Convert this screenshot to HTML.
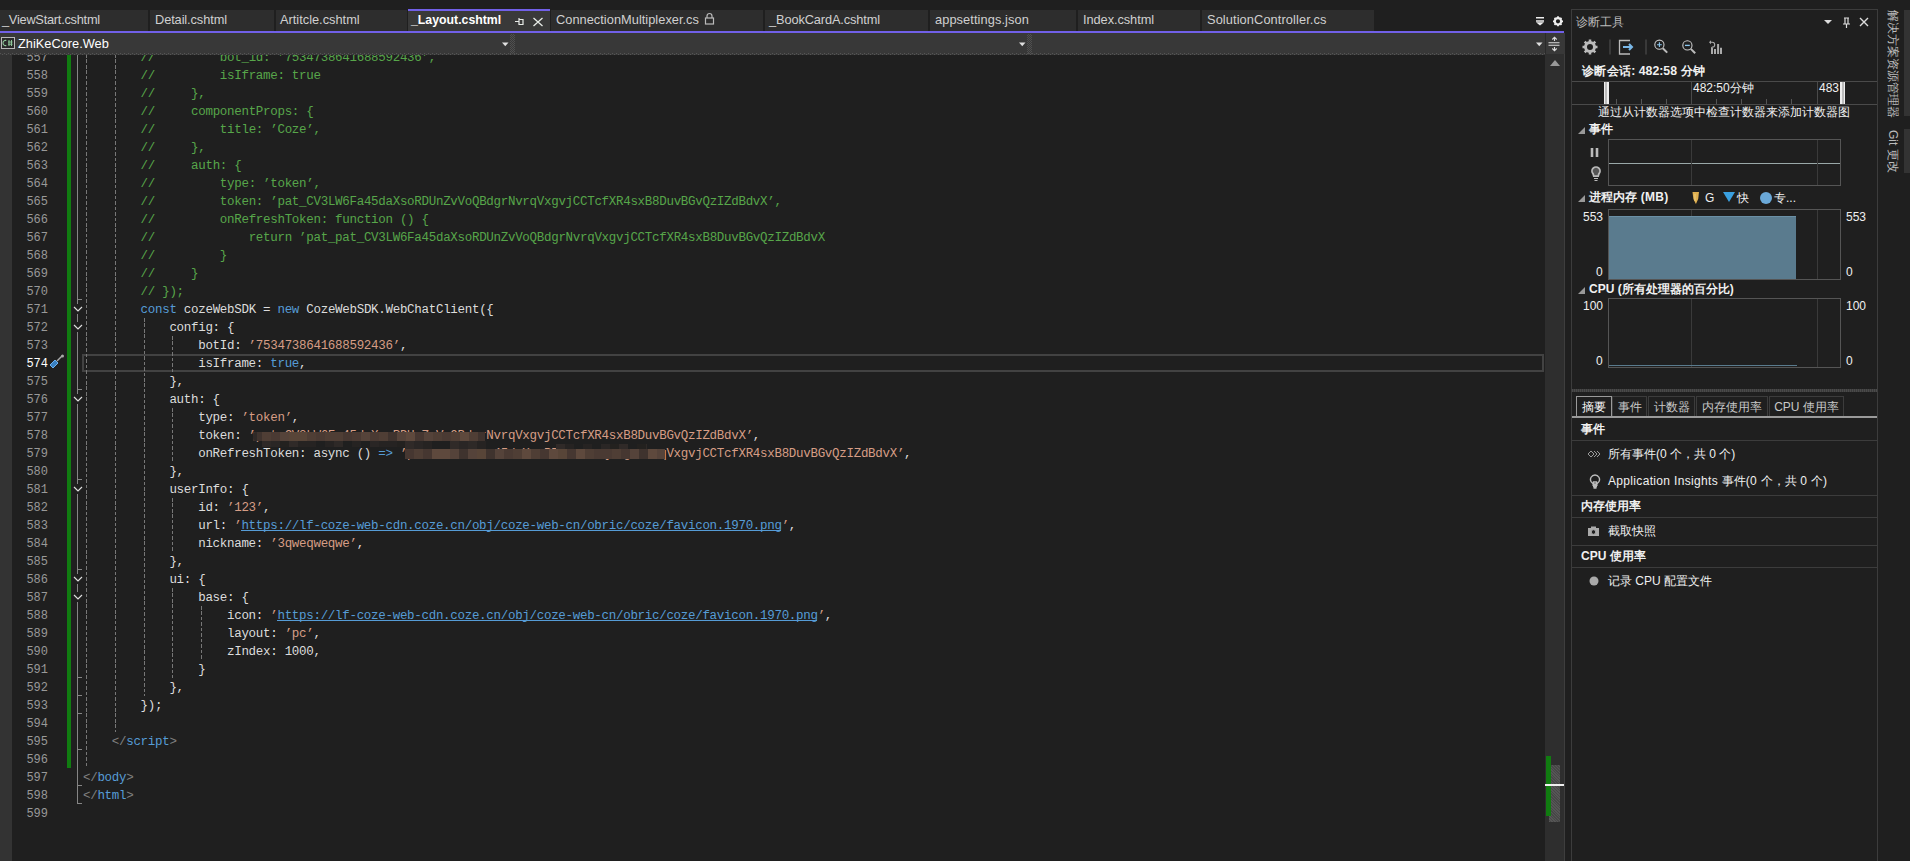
<!DOCTYPE html><html><head><meta charset="utf-8"><style>
*{margin:0;padding:0;box-sizing:border-box}
html,body{width:1910px;height:861px;overflow:hidden;background:#1f1f1f}
body{position:relative;font-family:"Liberation Sans",sans-serif;color:#dcdcdc}
.a{position:absolute}
.code{position:absolute;font-family:"Liberation Mono",monospace;font-size:12.5px;letter-spacing:-0.3px;white-space:pre;line-height:18px;height:18px}
.code i{display:inline-block;width:7.203125px;font-style:normal;letter-spacing:0}
.ln{position:absolute;left:11px;width:37px;text-align:right;font-family:"Liberation Mono",monospace;font-size:12px;line-height:18px;color:#999;white-space:pre}
.tab{position:absolute;top:10px;height:21px;background:#2d2d2d;font-size:12.8px;line-height:20px;color:#d0d0d0;white-space:pre}
.tab span{position:absolute;top:0}
.dg{position:absolute;width:1px;background:repeating-linear-gradient(to bottom,#777 0 3.6px,transparent 3.6px 5.45px)}
.pt{position:absolute;white-space:pre;color:#f0f0f0;font-size:12px;line-height:14px}
.b{font-weight:bold}
.cj{display:inline-block;width:1em;text-align:center;text-indent:0;letter-spacing:0}
.sep{position:absolute;left:1572px;width:305px;height:1px;background:#3c3c3c}
</style></head><body>
<div class="tab" style="left:0px;width:148px"><span style="left:2px;letter-spacing:-0.25px">_ViewStart.cshtml</span></div><div class="tab" style="left:150px;width:124px"><span style="left:5px;letter-spacing:-0.1px">Detail.cshtml</span></div><div class="tab" style="left:276px;width:131px"><span style="left:4px;letter-spacing:0px">Artitcle.cshtml</span></div><div class="tab" style="left:551px;width:212px"><span style="left:5px;letter-spacing:0.03px">ConnectionMultiplexer.cs</span></div><div class="tab" style="left:765px;width:163px"><span style="left:4px;letter-spacing:-0.12px">_BookCardA.cshtml</span></div><div class="tab" style="left:930px;width:146px"><span style="left:5px;letter-spacing:0.09px">appsettings.json</span></div><div class="tab" style="left:1078px;width:122px"><span style="left:5px;letter-spacing:-0.07px">Index.cshtml</span></div><div class="tab" style="left:1202px;width:172px"><span style="left:5px;letter-spacing:0.1px">SolutionController.cs</span></div><div class="tab" style="left:408px;width:142px;top:9px;height:22px;background:#393939;border-top:2px solid #7160e8"><span style="left:3px;top:-1px;color:#fff;font-weight:bold;font-size:12.3px">_Layout.cshtml</span></div><svg class="a" style="left:514px;top:17px" width="30" height="10" viewBox="0 0 30 10"><path d="M1 4.5h4M5 1v7M5.5 2.5h3.5v5h-3.5" stroke="#e8ece8" stroke-width="1.2" fill="none"/><path d="M19.5 1l9 8M28.5 1l-9 8" stroke="#e8ece8" stroke-width="1.3"/></svg><svg class="a" style="left:704px;top:12px" width="11" height="13" viewBox="0 0 11 13"><path d="M3 6V4a2.5 2.5 0 0 1 5 0v2" stroke="#bbb" stroke-width="1.2" fill="none"/><rect x="1.5" y="6" width="8" height="6" stroke="#bbb" stroke-width="1.2" fill="none"/></svg><svg class="a" style="left:1535px;top:16px" width="30" height="11" viewBox="0 0 30 11"><path d="M1 1.7h8M1 5h8" stroke="#eee" stroke-width="1.6"/><path d="M1 6.2h8L5 9.5z" fill="#eee"/><g transform="translate(23,5.3)"><circle r="3.2" stroke="#eee" stroke-width="2.2" fill="none"/><g stroke="#eee" stroke-width="1.8"><path d="M0-5v2M0 3v2M-5 0h2M3 0h2M-3.5-3.5l1.4 1.4M2.1 2.1l1.4 1.4M-3.5 3.5l1.4-1.4M2.1-2.1l1.4-1.4"/></g></g></svg><div class="a" style="left:0;top:31px;width:1564px;height:2px;background:#7160e8"></div><div class="a" style="left:0;top:33px;width:1565px;height:22px;background:#383838"></div><div class="a" style="left:0;top:53px;width:1545px;height:1px;background:repeating-linear-gradient(90deg,#555 0 1px,#3a3a3a 1px 2px,#383838 2px 4px)"></div><div class="a" style="left:0;top:54px;width:1545px;height:1px;background:repeating-linear-gradient(90deg,#383838 0 2px,#555 2px 3px,#3a3a3a 3px 4px)"></div><div class="a" style="left:510px;top:34px;width:5px;height:20px;background-image:linear-gradient(45deg,#505050 25%,transparent 25%,transparent 75%,#505050 75%),linear-gradient(45deg,#505050 25%,transparent 25%,transparent 75%,#505050 75%);background-size:2px 2px;background-position:0 0,1px 1px"></div><div class="a" style="left:1027px;top:34px;width:5px;height:20px;background-image:linear-gradient(45deg,#505050 25%,transparent 25%,transparent 75%,#505050 75%),linear-gradient(45deg,#505050 25%,transparent 25%,transparent 75%,#505050 75%);background-size:2px 2px;background-position:0 0,1px 1px"></div><svg class="a" style="left:502px;top:42px" width="7" height="5"><path d="M0 .5h6.5L3.25 4.2z" fill="#e0e0e0"/></svg><svg class="a" style="left:1019px;top:42px" width="7" height="5"><path d="M0 .5h6.5L3.25 4.2z" fill="#e0e0e0"/></svg><svg class="a" style="left:1536px;top:42px" width="7" height="5"><path d="M0 .5h6.5L3.25 4.2z" fill="#e0e0e0"/></svg><div class="a" style="left:1545px;top:33px;width:1px;height:21px;background:#2a2a2a"></div><svg class="a" style="left:1547px;top:36px" width="14" height="16" viewBox="0 0 14 16"><path d="M1.5 6.8h11M1.5 9.3h11M7.5 1.5v3.5M7.5 11v3.5" stroke="#ddd" stroke-width="1.1" fill="none"/><path d="M5.3 3.5l2.2-2.2 2.2 2.2M5.3 12.5l2.2 2.2 2.2-2.2" stroke="#ddd" stroke-width="1.1" fill="none"/></svg><svg class="a" style="left:1px;top:37px" width="14" height="12" viewBox="0 0 14 12"><rect x="0.5" y="0.5" width="13" height="11" fill="#2a2a2a" stroke="#b8b8b8"/><path d="M5.3 3.6a2.4 2.6 0 1 0 0 4.8" stroke="#8fc79a" stroke-width="1.1" fill="none"/><path d="M8 3v6M10.5 3v6M7 5h4.5M7 7.2h4.5" stroke="#8fc79a" stroke-width="1"/></svg><div class="a" style="left:18px;top:36px;font-size:12.8px;line-height:16px;color:#fff">ZhiKeCore.Web</div><div class="a" style="left:0;top:55px;width:1545px;height:806px;overflow:hidden"><div class="a" style="left:0;top:-55px;width:1545px;height:861px"><div class="a" style="left:0;top:54px;width:12px;height:807px;background:#333"></div><div class="a" style="left:67px;top:54px;width:4px;height:714px;background:#107c10"></div><div class="a" style="left:82px;top:354px;width:1462px;height:18px;border:2px solid #424242"></div><div class="a" style="left:77px;top:54px;width:1px;height:250px;background:#858585"></div><div class="a" style="left:77px;top:314px;width:1px;height:8px;background:#858585"></div><div class="a" style="left:77px;top:332px;width:1px;height:62px;background:#858585"></div><div class="a" style="left:77px;top:404px;width:1px;height:80px;background:#858585"></div><div class="a" style="left:77px;top:494px;width:1px;height:80px;background:#858585"></div><div class="a" style="left:77px;top:584px;width:1px;height:8px;background:#858585"></div><div class="a" style="left:77px;top:602px;width:1px;height:202px;background:#858585"></div><svg class="a" style="left:73px;top:306px" width="10" height="6"><path d="M1 1l4 4 4-4" stroke="#ddd" stroke-width="1.2" fill="none"/></svg><svg class="a" style="left:73px;top:324px" width="10" height="6"><path d="M1 1l4 4 4-4" stroke="#ddd" stroke-width="1.2" fill="none"/></svg><svg class="a" style="left:73px;top:396px" width="10" height="6"><path d="M1 1l4 4 4-4" stroke="#ddd" stroke-width="1.2" fill="none"/></svg><svg class="a" style="left:73px;top:486px" width="10" height="6"><path d="M1 1l4 4 4-4" stroke="#ddd" stroke-width="1.2" fill="none"/></svg><svg class="a" style="left:73px;top:576px" width="10" height="6"><path d="M1 1l4 4 4-4" stroke="#ddd" stroke-width="1.2" fill="none"/></svg><svg class="a" style="left:73px;top:594px" width="10" height="6"><path d="M1 1l4 4 4-4" stroke="#ddd" stroke-width="1.2" fill="none"/></svg><div class="a" style="left:77px;top:299px;width:5px;height:1px;background:#858585"></div><div class="a" style="left:77px;top:389px;width:5px;height:1px;background:#858585"></div><div class="a" style="left:77px;top:479px;width:5px;height:1px;background:#858585"></div><div class="a" style="left:77px;top:569px;width:5px;height:1px;background:#858585"></div><div class="a" style="left:77px;top:677px;width:5px;height:1px;background:#858585"></div><div class="a" style="left:77px;top:695px;width:5px;height:1px;background:#858585"></div><div class="a" style="left:77px;top:713px;width:5px;height:1px;background:#858585"></div><div class="a" style="left:77px;top:749px;width:5px;height:1px;background:#858585"></div><div class="a" style="left:77px;top:785px;width:5px;height:1px;background:#858585"></div><div class="a" style="left:77px;top:803px;width:5px;height:1px;background:#858585"></div><div class="dg" style="left:86px;top:54px;height:714px"></div><div class="dg" style="left:115px;top:54px;height:678px"></div><div class="dg" style="left:144px;top:318px;height:378px"></div><div class="dg" style="left:172px;top:336px;height:36px"></div><div class="dg" style="left:172px;top:408px;height:54px"></div><div class="dg" style="left:172px;top:498px;height:54px"></div><div class="dg" style="left:172px;top:588px;height:90px"></div><div class="dg" style="left:201px;top:606px;height:54px"></div><div class="ln" style="top:49px;color:#999">557</div><div class="code" style="left:140.6px;top:49px"><span style="color:#57a64a"><i>/</i><i>/</i><i> </i><i> </i><i> </i><i> </i><i> </i><i> </i><i> </i><i> </i><i> </i><i>b</i><i>o</i><i>t</i><i>_</i><i>i</i><i>d</i><i>:</i><i> </i><i>’</i><i>7</i><i>5</i><i>3</i><i>4</i><i>7</i><i>3</i><i>8</i><i>6</i><i>4</i><i>1</i><i>6</i><i>8</i><i>8</i><i>5</i><i>9</i><i>2</i><i>4</i><i>3</i><i>6</i><i>’</i><i>,</i></span></div><div class="ln" style="top:67px;color:#999">558</div><div class="code" style="left:140.6px;top:67px"><span style="color:#57a64a"><i>/</i><i>/</i><i> </i><i> </i><i> </i><i> </i><i> </i><i> </i><i> </i><i> </i><i> </i><i>i</i><i>s</i><i>I</i><i>f</i><i>r</i><i>a</i><i>m</i><i>e</i><i>:</i><i> </i><i>t</i><i>r</i><i>u</i><i>e</i></span></div><div class="ln" style="top:85px;color:#999">559</div><div class="code" style="left:140.6px;top:85px"><span style="color:#57a64a"><i>/</i><i>/</i><i> </i><i> </i><i> </i><i> </i><i> </i><i>}</i><i>,</i></span></div><div class="ln" style="top:103px;color:#999">560</div><div class="code" style="left:140.6px;top:103px"><span style="color:#57a64a"><i>/</i><i>/</i><i> </i><i> </i><i> </i><i> </i><i> </i><i>c</i><i>o</i><i>m</i><i>p</i><i>o</i><i>n</i><i>e</i><i>n</i><i>t</i><i>P</i><i>r</i><i>o</i><i>p</i><i>s</i><i>:</i><i> </i><i>{</i></span></div><div class="ln" style="top:121px;color:#999">561</div><div class="code" style="left:140.6px;top:121px"><span style="color:#57a64a"><i>/</i><i>/</i><i> </i><i> </i><i> </i><i> </i><i> </i><i> </i><i> </i><i> </i><i> </i><i>t</i><i>i</i><i>t</i><i>l</i><i>e</i><i>:</i><i> </i><i>’</i><i>C</i><i>o</i><i>z</i><i>e</i><i>’</i><i>,</i></span></div><div class="ln" style="top:139px;color:#999">562</div><div class="code" style="left:140.6px;top:139px"><span style="color:#57a64a"><i>/</i><i>/</i><i> </i><i> </i><i> </i><i> </i><i> </i><i>}</i><i>,</i></span></div><div class="ln" style="top:157px;color:#999">563</div><div class="code" style="left:140.6px;top:157px"><span style="color:#57a64a"><i>/</i><i>/</i><i> </i><i> </i><i> </i><i> </i><i> </i><i>a</i><i>u</i><i>t</i><i>h</i><i>:</i><i> </i><i>{</i></span></div><div class="ln" style="top:175px;color:#999">564</div><div class="code" style="left:140.6px;top:175px"><span style="color:#57a64a"><i>/</i><i>/</i><i> </i><i> </i><i> </i><i> </i><i> </i><i> </i><i> </i><i> </i><i> </i><i>t</i><i>y</i><i>p</i><i>e</i><i>:</i><i> </i><i>’</i><i>t</i><i>o</i><i>k</i><i>e</i><i>n</i><i>’</i><i>,</i></span></div><div class="ln" style="top:193px;color:#999">565</div><div class="code" style="left:140.6px;top:193px"><span style="color:#57a64a"><i>/</i><i>/</i><i> </i><i> </i><i> </i><i> </i><i> </i><i> </i><i> </i><i> </i><i> </i><i>t</i><i>o</i><i>k</i><i>e</i><i>n</i><i>:</i><i> </i><i>’</i><i>p</i><i>a</i><i>t</i><i>_</i><i>C</i><i>V</i><i>3</i><i>L</i><i>W</i><i>6</i><i>F</i><i>a</i><i>4</i><i>5</i><i>d</i><i>a</i><i>X</i><i>s</i><i>o</i><i>R</i><i>D</i><i>U</i><i>n</i><i>Z</i><i>v</i><i>V</i><i>o</i><i>Q</i><i>B</i><i>d</i><i>g</i><i>r</i><i>N</i><i>v</i><i>r</i><i>q</i><i>V</i><i>x</i><i>g</i><i>v</i><i>j</i><i>C</i><i>C</i><i>T</i><i>c</i><i>f</i><i>X</i><i>R</i><i>4</i><i>s</i><i>x</i><i>B</i><i>8</i><i>D</i><i>u</i><i>v</i><i>B</i><i>G</i><i>v</i><i>Q</i><i>z</i><i>I</i><i>Z</i><i>d</i><i>B</i><i>d</i><i>v</i><i>X</i><i>’</i><i>,</i></span></div><div class="ln" style="top:211px;color:#999">566</div><div class="code" style="left:140.6px;top:211px"><span style="color:#57a64a"><i>/</i><i>/</i><i> </i><i> </i><i> </i><i> </i><i> </i><i> </i><i> </i><i> </i><i> </i><i>o</i><i>n</i><i>R</i><i>e</i><i>f</i><i>r</i><i>e</i><i>s</i><i>h</i><i>T</i><i>o</i><i>k</i><i>e</i><i>n</i><i>:</i><i> </i><i>f</i><i>u</i><i>n</i><i>c</i><i>t</i><i>i</i><i>o</i><i>n</i><i> </i><i>(</i><i>)</i><i> </i><i>{</i></span></div><div class="ln" style="top:229px;color:#999">567</div><div class="code" style="left:140.6px;top:229px"><span style="color:#57a64a"><i>/</i><i>/</i><i> </i><i> </i><i> </i><i> </i><i> </i><i> </i><i> </i><i> </i><i> </i><i> </i><i> </i><i> </i><i> </i><i>r</i><i>e</i><i>t</i><i>u</i><i>r</i><i>n</i><i> </i><i>’</i><i>p</i><i>a</i><i>t</i><i>_</i><i>p</i><i>a</i><i>t</i><i>_</i><i>C</i><i>V</i><i>3</i><i>L</i><i>W</i><i>6</i><i>F</i><i>a</i><i>4</i><i>5</i><i>d</i><i>a</i><i>X</i><i>s</i><i>o</i><i>R</i><i>D</i><i>U</i><i>n</i><i>Z</i><i>v</i><i>V</i><i>o</i><i>Q</i><i>B</i><i>d</i><i>g</i><i>r</i><i>N</i><i>v</i><i>r</i><i>q</i><i>V</i><i>x</i><i>g</i><i>v</i><i>j</i><i>C</i><i>C</i><i>T</i><i>c</i><i>f</i><i>X</i><i>R</i><i>4</i><i>s</i><i>x</i><i>B</i><i>8</i><i>D</i><i>u</i><i>v</i><i>B</i><i>G</i><i>v</i><i>Q</i><i>z</i><i>I</i><i>Z</i><i>d</i><i>B</i><i>d</i><i>v</i><i>X</i></span></div><div class="ln" style="top:247px;color:#999">568</div><div class="code" style="left:140.6px;top:247px"><span style="color:#57a64a"><i>/</i><i>/</i><i> </i><i> </i><i> </i><i> </i><i> </i><i> </i><i> </i><i> </i><i> </i><i>}</i></span></div><div class="ln" style="top:265px;color:#999">569</div><div class="code" style="left:140.6px;top:265px"><span style="color:#57a64a"><i>/</i><i>/</i><i> </i><i> </i><i> </i><i> </i><i> </i><i>}</i></span></div><div class="ln" style="top:283px;color:#999">570</div><div class="code" style="left:140.6px;top:283px"><span style="color:#57a64a"><i>/</i><i>/</i><i> </i><i>}</i><i>)</i><i>;</i></span></div><div class="ln" style="top:301px;color:#999">571</div><div class="code" style="left:140.6px;top:301px"><span style="color:#569cd6"><i>c</i><i>o</i><i>n</i><i>s</i><i>t</i></span><span style="color:#dcdcdc"><i> </i><i>c</i><i>o</i><i>z</i><i>e</i><i>W</i><i>e</i><i>b</i><i>S</i><i>D</i><i>K</i><i> </i><i>=</i><i> </i></span><span style="color:#569cd6"><i>n</i><i>e</i><i>w</i></span><span style="color:#dcdcdc"><i> </i><i>C</i><i>o</i><i>z</i><i>e</i><i>W</i><i>e</i><i>b</i><i>S</i><i>D</i><i>K</i><i>.</i><i>W</i><i>e</i><i>b</i><i>C</i><i>h</i><i>a</i><i>t</i><i>C</i><i>l</i><i>i</i><i>e</i><i>n</i><i>t</i><i>(</i><i>{</i></span></div><div class="ln" style="top:319px;color:#999">572</div><div class="code" style="left:169.4px;top:319px"><span style="color:#dcdcdc"><i>c</i><i>o</i><i>n</i><i>f</i><i>i</i><i>g</i><i>:</i><i> </i><i>{</i></span></div><div class="ln" style="top:337px;color:#999">573</div><div class="code" style="left:198.2px;top:337px"><span style="color:#dcdcdc"><i>b</i><i>o</i><i>t</i><i>I</i><i>d</i><i>:</i><i> </i></span><span style="color:#d69d85"><i>’</i><i>7</i><i>5</i><i>3</i><i>4</i><i>7</i><i>3</i><i>8</i><i>6</i><i>4</i><i>1</i><i>6</i><i>8</i><i>8</i><i>5</i><i>9</i><i>2</i><i>4</i><i>3</i><i>6</i><i>’</i></span><span style="color:#dcdcdc"><i>,</i></span></div><div class="ln" style="top:355px;color:#ffffff">574</div><div class="code" style="left:198.2px;top:355px"><span style="color:#dcdcdc"><i>i</i><i>s</i><i>I</i><i>f</i><i>r</i><i>a</i><i>m</i><i>e</i><i>:</i><i> </i></span><span style="color:#569cd6"><i>t</i><i>r</i><i>u</i><i>e</i></span><span style="color:#dcdcdc"><i>,</i></span></div><div class="ln" style="top:373px;color:#999">575</div><div class="code" style="left:169.4px;top:373px"><span style="color:#dcdcdc"><i>}</i><i>,</i></span></div><div class="ln" style="top:391px;color:#999">576</div><div class="code" style="left:169.4px;top:391px"><span style="color:#dcdcdc"><i>a</i><i>u</i><i>t</i><i>h</i><i>:</i><i> </i><i>{</i></span></div><div class="ln" style="top:409px;color:#999">577</div><div class="code" style="left:198.2px;top:409px"><span style="color:#dcdcdc"><i>t</i><i>y</i><i>p</i><i>e</i><i>:</i><i> </i></span><span style="color:#d69d85"><i>’</i><i>t</i><i>o</i><i>k</i><i>e</i><i>n</i><i>’</i></span><span style="color:#dcdcdc"><i>,</i></span></div><div class="ln" style="top:427px;color:#999">578</div><div class="code" style="left:198.2px;top:427px"><span style="color:#dcdcdc"><i>t</i><i>o</i><i>k</i><i>e</i><i>n</i><i>:</i><i> </i></span><span style="color:#d69d85"><i>’</i><i>p</i><i>a</i><i>t</i><i>_</i><i>C</i><i>V</i><i>3</i><i>L</i><i>W</i><i>6</i><i>F</i><i>a</i><i>4</i><i>5</i><i>d</i><i>a</i><i>X</i><i>s</i><i>o</i><i>R</i><i>D</i><i>U</i><i>n</i><i>Z</i><i>v</i><i>V</i><i>o</i><i>Q</i><i>B</i><i>d</i><i>g</i><i>r</i><i>N</i><i>v</i><i>r</i><i>q</i><i>V</i><i>x</i><i>g</i><i>v</i><i>j</i><i>C</i><i>C</i><i>T</i><i>c</i><i>f</i><i>X</i><i>R</i><i>4</i><i>s</i><i>x</i><i>B</i><i>8</i><i>D</i><i>u</i><i>v</i><i>B</i><i>G</i><i>v</i><i>Q</i><i>z</i><i>I</i><i>Z</i><i>d</i><i>B</i><i>d</i><i>v</i><i>X</i><i>’</i></span><span style="color:#dcdcdc"><i>,</i></span></div><div class="ln" style="top:445px;color:#999">579</div><div class="code" style="left:198.2px;top:445px"><span style="color:#dcdcdc"><i>o</i><i>n</i><i>R</i><i>e</i><i>f</i><i>r</i><i>e</i><i>s</i><i>h</i><i>T</i><i>o</i><i>k</i><i>e</i><i>n</i><i>:</i><i> </i><i>a</i><i>s</i><i>y</i><i>n</i><i>c</i><i> </i><i>(</i><i>)</i><i> </i></span><span style="color:#569cd6"><i>=</i><i>&gt;</i></span><span style="color:#dcdcdc"><i> </i></span><span style="color:#d69d85"><i>’</i><i>p</i><i>a</i><i>t</i><i>_</i><i>C</i><i>V</i><i>3</i><i>L</i><i>W</i><i>6</i><i>F</i><i>a</i><i>4</i><i>5</i><i>d</i><i>a</i><i>X</i><i>s</i><i>o</i><i>R</i><i>D</i><i>U</i><i>n</i><i>Z</i><i>v</i><i>V</i><i>o</i><i>Q</i><i>B</i><i>d</i><i>g</i><i>r</i><i>N</i><i>v</i><i>r</i><i>q</i><i>V</i><i>x</i><i>g</i><i>v</i><i>j</i><i>C</i><i>C</i><i>T</i><i>c</i><i>f</i><i>X</i><i>R</i><i>4</i><i>s</i><i>x</i><i>B</i><i>8</i><i>D</i><i>u</i><i>v</i><i>B</i><i>G</i><i>v</i><i>Q</i><i>z</i><i>I</i><i>Z</i><i>d</i><i>B</i><i>d</i><i>v</i><i>X</i><i>’</i></span><span style="color:#dcdcdc"><i>,</i></span></div><div class="ln" style="top:463px;color:#999">580</div><div class="code" style="left:169.4px;top:463px"><span style="color:#dcdcdc"><i>}</i><i>,</i></span></div><div class="ln" style="top:481px;color:#999">581</div><div class="code" style="left:169.4px;top:481px"><span style="color:#dcdcdc"><i>u</i><i>s</i><i>e</i><i>r</i><i>I</i><i>n</i><i>f</i><i>o</i><i>:</i><i> </i><i>{</i></span></div><div class="ln" style="top:499px;color:#999">582</div><div class="code" style="left:198.2px;top:499px"><span style="color:#dcdcdc"><i>i</i><i>d</i><i>:</i><i> </i></span><span style="color:#d69d85"><i>’</i><i>1</i><i>2</i><i>3</i><i>’</i></span><span style="color:#dcdcdc"><i>,</i></span></div><div class="ln" style="top:517px;color:#999">583</div><div class="a" style="left:241.4px;top:530px;width:540.0px;height:1px;background:#569cd6"></div><div class="code" style="left:198.2px;top:517px"><span style="color:#dcdcdc"><i>u</i><i>r</i><i>l</i><i>:</i><i> </i></span><span style="color:#d69d85"><i>’</i></span><span style="color:#569cd6"><i>h</i><i>t</i><i>t</i><i>p</i><i>s</i><i>:</i><i>/</i><i>/</i><i>l</i><i>f</i><i>-</i><i>c</i><i>o</i><i>z</i><i>e</i><i>-</i><i>w</i><i>e</i><i>b</i><i>-</i><i>c</i><i>d</i><i>n</i><i>.</i><i>c</i><i>o</i><i>z</i><i>e</i><i>.</i><i>c</i><i>n</i><i>/</i><i>o</i><i>b</i><i>j</i><i>/</i><i>c</i><i>o</i><i>z</i><i>e</i><i>-</i><i>w</i><i>e</i><i>b</i><i>-</i><i>c</i><i>n</i><i>/</i><i>o</i><i>b</i><i>r</i><i>i</i><i>c</i><i>/</i><i>c</i><i>o</i><i>z</i><i>e</i><i>/</i><i>f</i><i>a</i><i>v</i><i>i</i><i>c</i><i>o</i><i>n</i><i>.</i><i>1</i><i>9</i><i>7</i><i>0</i><i>.</i><i>p</i><i>n</i><i>g</i></span><span style="color:#d69d85"><i>’</i></span><span style="color:#dcdcdc"><i>,</i></span></div><div class="ln" style="top:535px;color:#999">584</div><div class="code" style="left:198.2px;top:535px"><span style="color:#dcdcdc"><i>n</i><i>i</i><i>c</i><i>k</i><i>n</i><i>a</i><i>m</i><i>e</i><i>:</i><i> </i></span><span style="color:#d69d85"><i>’</i><i>3</i><i>q</i><i>w</i><i>e</i><i>q</i><i>w</i><i>e</i><i>q</i><i>w</i><i>e</i><i>’</i></span><span style="color:#dcdcdc"><i>,</i></span></div><div class="ln" style="top:553px;color:#999">585</div><div class="code" style="left:169.4px;top:553px"><span style="color:#dcdcdc"><i>}</i><i>,</i></span></div><div class="ln" style="top:571px;color:#999">586</div><div class="code" style="left:169.4px;top:571px"><span style="color:#dcdcdc"><i>u</i><i>i</i><i>:</i><i> </i><i>{</i></span></div><div class="ln" style="top:589px;color:#999">587</div><div class="code" style="left:198.2px;top:589px"><span style="color:#dcdcdc"><i>b</i><i>a</i><i>s</i><i>e</i><i>:</i><i> </i><i>{</i></span></div><div class="ln" style="top:607px;color:#999">588</div><div class="a" style="left:277.4px;top:620px;width:540.0px;height:1px;background:#569cd6"></div><div class="code" style="left:227.0px;top:607px"><span style="color:#dcdcdc"><i>i</i><i>c</i><i>o</i><i>n</i><i>:</i><i> </i></span><span style="color:#d69d85"><i>’</i></span><span style="color:#569cd6"><i>h</i><i>t</i><i>t</i><i>p</i><i>s</i><i>:</i><i>/</i><i>/</i><i>l</i><i>f</i><i>-</i><i>c</i><i>o</i><i>z</i><i>e</i><i>-</i><i>w</i><i>e</i><i>b</i><i>-</i><i>c</i><i>d</i><i>n</i><i>.</i><i>c</i><i>o</i><i>z</i><i>e</i><i>.</i><i>c</i><i>n</i><i>/</i><i>o</i><i>b</i><i>j</i><i>/</i><i>c</i><i>o</i><i>z</i><i>e</i><i>-</i><i>w</i><i>e</i><i>b</i><i>-</i><i>c</i><i>n</i><i>/</i><i>o</i><i>b</i><i>r</i><i>i</i><i>c</i><i>/</i><i>c</i><i>o</i><i>z</i><i>e</i><i>/</i><i>f</i><i>a</i><i>v</i><i>i</i><i>c</i><i>o</i><i>n</i><i>.</i><i>1</i><i>9</i><i>7</i><i>0</i><i>.</i><i>p</i><i>n</i><i>g</i></span><span style="color:#d69d85"><i>’</i></span><span style="color:#dcdcdc"><i>,</i></span></div><div class="ln" style="top:625px;color:#999">589</div><div class="code" style="left:227.0px;top:625px"><span style="color:#dcdcdc"><i>l</i><i>a</i><i>y</i><i>o</i><i>u</i><i>t</i><i>:</i><i> </i></span><span style="color:#d69d85"><i>’</i><i>p</i><i>c</i><i>’</i></span><span style="color:#dcdcdc"><i>,</i></span></div><div class="ln" style="top:643px;color:#999">590</div><div class="code" style="left:227.0px;top:643px"><span style="color:#dcdcdc"><i>z</i><i>I</i><i>n</i><i>d</i><i>e</i><i>x</i><i>:</i><i> </i></span><span style="color:#dcdcdc"><i>1</i><i>0</i><i>0</i><i>0</i></span><span style="color:#dcdcdc"><i>,</i></span></div><div class="ln" style="top:661px;color:#999">591</div><div class="code" style="left:198.2px;top:661px"><span style="color:#dcdcdc"><i>}</i></span></div><div class="ln" style="top:679px;color:#999">592</div><div class="code" style="left:169.4px;top:679px"><span style="color:#dcdcdc"><i>}</i><i>,</i></span></div><div class="ln" style="top:697px;color:#999">593</div><div class="code" style="left:140.6px;top:697px"><span style="color:#dcdcdc"><i>}</i><i>)</i><i>;</i></span></div><div class="ln" style="top:715px;color:#999">594</div><div class="ln" style="top:733px;color:#999">595</div><div class="code" style="left:111.8px;top:733px"><span style="color:#808080"><i>&lt;</i><i>/</i></span><span style="color:#569cd6"><i>s</i><i>c</i><i>r</i><i>i</i><i>p</i><i>t</i></span><span style="color:#808080"><i>&gt;</i></span></div><div class="ln" style="top:751px;color:#999">596</div><div class="ln" style="top:769px;color:#999">597</div><div class="code" style="left:83.0px;top:769px"><span style="color:#808080"><i>&lt;</i><i>/</i></span><span style="color:#569cd6"><i>b</i><i>o</i><i>d</i><i>y</i></span><span style="color:#808080"><i>&gt;</i></span></div><div class="ln" style="top:787px;color:#999">598</div><div class="code" style="left:83.0px;top:787px"><span style="color:#808080"><i>&lt;</i><i>/</i></span><span style="color:#569cd6"><i>h</i><i>t</i><i>m</i><i>l</i></span><span style="color:#808080"><i>&gt;</i></span></div><div class="ln" style="top:805px;color:#999">599</div><svg class="a" style="left:49px;top:354px" width="16" height="15" viewBox="0 0 16 15"><path d="M1 11l5-5 3 3-5 5z" fill="#3a80c0" stroke="#6ab0f0" stroke-width="1"/><path d="M8 7l5-5" stroke="#aaa" stroke-width="1.5"/><circle cx="13.5" cy="2" r="1.5" fill="#aaa"/></svg><div class="a" style="left:262px;top:441px;width:9px;height:6px;background:#2e2927"></div><div class="a" style="left:271px;top:441px;width:9px;height:6px;background:#2a2625"></div><div class="a" style="left:280px;top:441px;width:9px;height:6px;background:#23211f"></div><div class="a" style="left:289px;top:441px;width:9px;height:6px;background:#302a28"></div><div class="a" style="left:298px;top:441px;width:9px;height:6px;background:#262322"></div><div class="a" style="left:307px;top:441px;width:9px;height:6px;background:#262322"></div><div class="a" style="left:316px;top:441px;width:9px;height:6px;background:#1f1f1f"></div><div class="a" style="left:325px;top:441px;width:9px;height:6px;background:#262322"></div><div class="a" style="left:334px;top:441px;width:9px;height:6px;background:#2e2927"></div><div class="a" style="left:343px;top:441px;width:9px;height:6px;background:#1f1f1f"></div><div class="a" style="left:352px;top:441px;width:9px;height:6px;background:#262322"></div><div class="a" style="left:361px;top:441px;width:9px;height:6px;background:#1f1f1f"></div><div class="a" style="left:370px;top:441px;width:9px;height:6px;background:#2a2625"></div><div class="a" style="left:379px;top:441px;width:9px;height:6px;background:#262322"></div><div class="a" style="left:388px;top:441px;width:9px;height:6px;background:#262322"></div><div class="a" style="left:397px;top:441px;width:9px;height:6px;background:#23211f"></div><div class="a" style="left:406px;top:441px;width:9px;height:6px;background:#23211f"></div><div class="a" style="left:415px;top:441px;width:9px;height:6px;background:#262322"></div><div class="a" style="left:424px;top:441px;width:9px;height:6px;background:#2a2625"></div><div class="a" style="left:433px;top:441px;width:9px;height:6px;background:#262322"></div><div class="a" style="left:442px;top:441px;width:9px;height:6px;background:#1f1f1f"></div><div class="a" style="left:451px;top:441px;width:9px;height:6px;background:#23211f"></div><div class="a" style="left:460px;top:441px;width:2px;height:6px;background:#262322"></div><div class="a" style="left:253px;top:432px;width:9px;height:9px;background:#3f332e"></div><div class="a" style="left:262px;top:432px;width:9px;height:9px;background:#4f3e35"></div><div class="a" style="left:271px;top:432px;width:9px;height:9px;background:#4a3a33"></div><div class="a" style="left:280px;top:432px;width:9px;height:9px;background:#55433a"></div><div class="a" style="left:289px;top:432px;width:9px;height:9px;background:#584538"></div><div class="a" style="left:298px;top:432px;width:9px;height:9px;background:#584538"></div><div class="a" style="left:307px;top:432px;width:9px;height:9px;background:#4f3e35"></div><div class="a" style="left:316px;top:432px;width:9px;height:9px;background:#4a3a33"></div><div class="a" style="left:325px;top:432px;width:9px;height:9px;background:#4f3e35"></div><div class="a" style="left:334px;top:432px;width:9px;height:9px;background:#4f3e35"></div><div class="a" style="left:343px;top:432px;width:9px;height:9px;background:#463731"></div><div class="a" style="left:352px;top:432px;width:9px;height:9px;background:#4a3a33"></div><div class="a" style="left:361px;top:432px;width:9px;height:9px;background:#55433a"></div><div class="a" style="left:370px;top:432px;width:9px;height:9px;background:#4a3a33"></div><div class="a" style="left:379px;top:432px;width:9px;height:9px;background:#4f3e35"></div><div class="a" style="left:388px;top:432px;width:9px;height:9px;background:#3f332e"></div><div class="a" style="left:397px;top:432px;width:9px;height:9px;background:#55433a"></div><div class="a" style="left:406px;top:432px;width:9px;height:9px;background:#5e493d"></div><div class="a" style="left:415px;top:432px;width:9px;height:9px;background:#463731"></div><div class="a" style="left:424px;top:432px;width:9px;height:9px;background:#55433a"></div><div class="a" style="left:433px;top:432px;width:9px;height:9px;background:#4f3e35"></div><div class="a" style="left:442px;top:432px;width:9px;height:9px;background:#4a3a33"></div><div class="a" style="left:451px;top:432px;width:9px;height:9px;background:#4f3e35"></div><div class="a" style="left:460px;top:432px;width:9px;height:9px;background:#5e493d"></div><div class="a" style="left:469px;top:432px;width:9px;height:9px;background:#4f3e35"></div><div class="a" style="left:478px;top:432px;width:7px;height:9px;background:#3f332e"></div><div class="a" style="left:253px;top:432px;width:4px;height:9px;background:#1f1f1f;border-radius:4px 0 0 4px;opacity:.5"></div><div class="a" style="left:405px;top:441px;width:9px;height:8px;background:#302a28"></div><div class="a" style="left:414px;top:441px;width:9px;height:8px;background:#2a2625"></div><div class="a" style="left:423px;top:441px;width:9px;height:8px;background:#262322"></div><div class="a" style="left:432px;top:441px;width:9px;height:8px;background:#1f1f1f"></div><div class="a" style="left:441px;top:441px;width:9px;height:8px;background:#1f1f1f"></div><div class="a" style="left:450px;top:441px;width:9px;height:8px;background:#302a28"></div><div class="a" style="left:459px;top:441px;width:9px;height:8px;background:#2a2625"></div><div class="a" style="left:468px;top:441px;width:9px;height:8px;background:#2e2927"></div><div class="a" style="left:477px;top:441px;width:9px;height:8px;background:#262322"></div><div class="a" style="left:486px;top:441px;width:9px;height:8px;background:#1f1f1f"></div><div class="a" style="left:556px;top:441px;width:110px;height:8px;background:#1f1f1f"></div><div class="a" style="left:556px;top:444px;width:9px;height:5px;background:#302a28"></div><div class="a" style="left:565px;top:444px;width:9px;height:5px;background:#262322"></div><div class="a" style="left:574px;top:444px;width:9px;height:5px;background:#1f1f1f"></div><div class="a" style="left:583px;top:444px;width:9px;height:5px;background:#262322"></div><div class="a" style="left:592px;top:444px;width:9px;height:5px;background:#1f1f1f"></div><div class="a" style="left:601px;top:444px;width:9px;height:5px;background:#2a2625"></div><div class="a" style="left:610px;top:444px;width:9px;height:5px;background:#23211f"></div><div class="a" style="left:619px;top:444px;width:9px;height:5px;background:#302a28"></div><div class="a" style="left:628px;top:444px;width:9px;height:5px;background:#1f1f1f"></div><div class="a" style="left:637px;top:444px;width:9px;height:5px;background:#23211f"></div><div class="a" style="left:646px;top:444px;width:1px;height:5px;background:#2e2927"></div><div class="a" style="left:405px;top:449px;width:9px;height:10px;background:#463731"></div><div class="a" style="left:414px;top:449px;width:9px;height:10px;background:#4f3e35"></div><div class="a" style="left:423px;top:449px;width:9px;height:10px;background:#463731"></div><div class="a" style="left:432px;top:449px;width:9px;height:10px;background:#5e493d"></div><div class="a" style="left:441px;top:449px;width:9px;height:10px;background:#5e493d"></div><div class="a" style="left:450px;top:449px;width:9px;height:10px;background:#55433a"></div><div class="a" style="left:459px;top:449px;width:9px;height:10px;background:#3f332e"></div><div class="a" style="left:468px;top:449px;width:9px;height:10px;background:#55433a"></div><div class="a" style="left:477px;top:449px;width:9px;height:10px;background:#584538"></div><div class="a" style="left:486px;top:449px;width:9px;height:10px;background:#3f332e"></div><div class="a" style="left:495px;top:449px;width:9px;height:10px;background:#55433a"></div><div class="a" style="left:504px;top:449px;width:9px;height:10px;background:#4a3a33"></div><div class="a" style="left:513px;top:449px;width:9px;height:10px;background:#4f3e35"></div><div class="a" style="left:522px;top:449px;width:9px;height:10px;background:#5e493d"></div><div class="a" style="left:531px;top:449px;width:9px;height:10px;background:#4f3e35"></div><div class="a" style="left:540px;top:449px;width:9px;height:10px;background:#463731"></div><div class="a" style="left:549px;top:449px;width:9px;height:10px;background:#5e493d"></div><div class="a" style="left:558px;top:449px;width:9px;height:10px;background:#584538"></div><div class="a" style="left:567px;top:449px;width:9px;height:10px;background:#463731"></div><div class="a" style="left:576px;top:449px;width:9px;height:10px;background:#5e493d"></div><div class="a" style="left:585px;top:449px;width:9px;height:10px;background:#4f3e35"></div><div class="a" style="left:594px;top:449px;width:9px;height:10px;background:#4a3a33"></div><div class="a" style="left:603px;top:449px;width:9px;height:10px;background:#4a3a33"></div><div class="a" style="left:612px;top:449px;width:9px;height:10px;background:#4f3e35"></div><div class="a" style="left:621px;top:449px;width:9px;height:10px;background:#463731"></div><div class="a" style="left:630px;top:449px;width:9px;height:10px;background:#55433a"></div><div class="a" style="left:639px;top:449px;width:9px;height:10px;background:#3f332e"></div><div class="a" style="left:648px;top:449px;width:9px;height:10px;background:#5e493d"></div><div class="a" style="left:657px;top:449px;width:8px;height:10px;background:#55433a"></div></div></div><div class="a" style="left:1545px;top:54px;width:20px;height:807px;background:#2e2e2e;border-right:1px solid #3e3e3e"></div><svg class="a" style="left:1549px;top:59px" width="12" height="8"><path d="M1 7h10L6 1z" fill="#999"/></svg><div class="a" style="left:1546px;top:756px;width:5px;height:60px;background:#107c10"></div><div class="a" style="left:1549px;top:765px;width:11px;height:57px;background:repeating-linear-gradient(45deg,#5a5a5a 0 1px,#4a4a4a 1px 2px);opacity:.9"></div><div class="a" style="left:1546px;top:756px;width:5px;height:60px;background:#107c10"></div><div class="a" style="left:1545px;top:784px;width:19px;height:2px;background:#eee"></div><div class="a" style="left:1571px;top:9px;width:307px;height:852px;border:1px solid #3c3c3c;border-bottom:none"></div><div class="pt" style="left:1576px;top:15px;color:#bbb;font-size:12px"><span class="cj">诊</span><span class="cj">断</span><span class="cj">工</span><span class="cj">具</span></div><svg class="a" style="left:1823px;top:17px" width="50" height="12" viewBox="0 0 50 12"><path d="M1 3h8L5 7z" fill="#ddd"/><path d="M21 1h5M22 1v6h3V1M20 7h7M23.5 7v4" stroke="#ddd" stroke-width="1.2" fill="none"/><path d="M37 1l8 8M45 1l-8 8" stroke="#ddd" stroke-width="1.4"/></svg><svg class="a" style="left:1580px;top:38px" width="150" height="19" viewBox="0 0 150 19"><g transform="translate(10,9)"><circle r="4.5" stroke="#bbb" stroke-width="3" fill="none"/><g stroke="#bbb" stroke-width="2.5"><path d="M0-7.5v3M0 4.5v3M-7.5 0h3M4.5 0h3M-5.3-5.3l2 2M3.3 3.3l2 2M-5.3 5.3l2-2M3.3-3.3l2-2"/></g></g><path d="M30 1.5v15" stroke="#555"/><path d="M50 2.5h-10.5v13.5h10.5" stroke="#bbb" stroke-width="1.3" fill="none"/><path d="M43 9h9M49 6l3 3-3 3" stroke="#7ab8e8" stroke-width="2" fill="none"/><path d="M66 1.5v15" stroke="#555"/><circle cx="79.4" cy="6.7" r="4.6" stroke="#c8c8c8" stroke-width="1.1" fill="none"/><path d="M77 6.7h4.8M79.4 4.3v4.8" stroke="#8cc8f0" stroke-width="1.1"/><path d="M82.8 10.2l4.4 4.4" stroke="#bbb" stroke-width="2"/><circle cx="107.4" cy="7.4" r="4.6" stroke="#c8c8c8" stroke-width="1.1" fill="none"/><path d="M105 7.4h4.8" stroke="#8cc8f0" stroke-width="1.3"/><path d="M110.8 10.9l4.4 4.4" stroke="#bbb" stroke-width="2"/><path d="M132 16v-6M135 16v-5M138.1 16v-10M141 16v-6.2" stroke="#aaa" stroke-width="2"/><path d="M130 4.3h2.3a2.4 2.4 0 0 1 0 4.8l-1 .9" stroke="#aaa" stroke-width="1.1" fill="none"/><path d="M129 4.3l2-2v4z" fill="#aaa"/></svg><div class="pt b" style="left:1582px;top:64px;font-size:12.3px"><span class="cj">诊</span><span class="cj">断</span><span class="cj">会</span><span class="cj">话</span>: 482:58 <span class="cj">分</span><span class="cj">钟</span></div><div class="a" style="left:1572px;top:81px;width:305px;height:1px;background:#4a4a4a"></div><div class="a" style="left:1572px;top:104px;width:305px;height:1px;background:#4a4a4a"></div><div class="a" style="left:1604px;top:82px;width:5px;height:22px;background:linear-gradient(90deg,#eee 0 1.5px,#bbb 1.5px 3.5px,#eee 3.5px)"></div><div class="a" style="left:1840px;top:82px;width:5px;height:22px;background:linear-gradient(90deg,#eee 0 1.5px,#bbb 1.5px 3.5px,#eee 3.5px)"></div><div class="a" style="left:1616px;top:99px;width:1px;height:5px;background:#555"></div><div class="a" style="left:1641px;top:99px;width:1px;height:5px;background:#555"></div><div class="a" style="left:1666px;top:99px;width:1px;height:5px;background:#555"></div><div class="a" style="left:1716px;top:99px;width:1px;height:5px;background:#555"></div><div class="a" style="left:1741px;top:99px;width:1px;height:5px;background:#555"></div><div class="a" style="left:1766px;top:99px;width:1px;height:5px;background:#555"></div><div class="a" style="left:1791px;top:99px;width:1px;height:5px;background:#555"></div><div class="a" style="left:1691px;top:82px;width:1px;height:22px;background:#4a4a4a"></div><div class="a" style="left:1817px;top:82px;width:1px;height:22px;background:#4a4a4a"></div><div class="pt" style="left:1693px;top:81px;font-size:12px">482:50<span class="cj">分</span><span class="cj">钟</span></div><div class="pt" style="left:1819px;top:81px;font-size:12px">483</div><div class="pt" style="left:1598px;top:105px;font-size:12px"><span class="cj">通</span><span class="cj">过</span><span class="cj">从</span><span class="cj">计</span><span class="cj">数</span><span class="cj">器</span><span class="cj">选</span><span class="cj">项</span><span class="cj">中</span><span class="cj">检</span><span class="cj">查</span><span class="cj">计</span><span class="cj">数</span><span class="cj">器</span><span class="cj">来</span><span class="cj">添</span><span class="cj">加</span><span class="cj">计</span><span class="cj">数</span><span class="cj">器</span><span class="cj">图</span></div><svg class="a" style="left:1578px;top:127px" width="8" height="8"><path d="M7 0v7H0z" fill="#999"/></svg><div class="pt b" style="left:1589px;top:122px"><span class="cj">事</span><span class="cj">件</span></div><div class="a" style="left:1608px;top:139px;width:233px;height:47px;border:1px solid #555"></div><div class="a" style="left:1609px;top:163px;width:231px;height:1px;background:#9aa8a8"></div><div class="a" style="left:1691px;top:140px;width:1px;height:45px;background:#3a3a3a"></div><div class="a" style="left:1817px;top:140px;width:1px;height:45px;background:#3a3a3a"></div><svg class="a" style="left:1590px;top:147px" width="12" height="38"><path d="M2 1v9M7 1v9" stroke="#bbb" stroke-width="2.6"/><path d="M3.8 29.2l-.7-2.4a4 4 0 1 1 5.8 0l-.7 2.4z" stroke="#bbb" stroke-width="1.8" fill="#555"/><path d="M4 31.5h4M4.5 33.5h3" stroke="#bbb" stroke-width="1.2"/></svg><svg class="a" style="left:1578px;top:195px" width="8" height="8"><path d="M7 0v7H0z" fill="#999"/></svg><div class="pt b" style="left:1589px;top:190px;letter-spacing:0.33px"><span class="cj">进</span><span class="cj">程</span><span class="cj">内</span><span class="cj">存</span> (MB)</div><svg class="a" style="left:1691px;top:191px" width="110" height="15"><path d="M1.5 1h6.5l-.8 7-2.3 5-2.5-5z" fill="#e0b050"/><path d="M4 3v7" stroke="#f0d080" stroke-width="1"/><path d="M32 1h12l-6 10z" fill="#3aa0e0"/><circle cx="75" cy="7" r="6" fill="#6aa8d8"/></svg><div class="pt" style="left:1705px;top:191px">G</div><div class="pt" style="left:1737px;top:191px"><span class="cj">快</span></div><div class="pt" style="left:1774px;top:191px"><span class="cj">专</span>...</div><div class="a" style="left:1608px;top:209px;width:233px;height:71px;border:1px solid #555"></div><div class="a" style="left:1691px;top:210px;width:1px;height:69px;background:#3a3a3a"></div><div class="a" style="left:1817px;top:210px;width:1px;height:69px;background:#3a3a3a"></div><div class="a" style="left:1609px;top:216px;width:187px;height:63px;background:#5a7b8e;border-top:1px solid #6a8fa5"></div><div class="pt" style="left:1583px;top:210px">553</div><div class="pt" style="left:1846px;top:210px">553</div><div class="pt" style="left:1596px;top:265px">0</div><div class="pt" style="left:1846px;top:265px">0</div><svg class="a" style="left:1578px;top:287px" width="8" height="8"><path d="M7 0v7H0z" fill="#999"/></svg><div class="pt b" style="left:1589px;top:282px">CPU (<span class="cj">所</span><span class="cj">有</span><span class="cj">处</span><span class="cj">理</span><span class="cj">器</span><span class="cj">的</span><span class="cj">百</span><span class="cj">分</span><span class="cj">比</span>)</div><div class="a" style="left:1608px;top:298px;width:233px;height:70px;border:1px solid #555"></div><div class="a" style="left:1691px;top:299px;width:1px;height:68px;background:#3a3a3a"></div><div class="a" style="left:1817px;top:299px;width:1px;height:68px;background:#3a3a3a"></div><div class="a" style="left:1609px;top:365px;width:188px;height:1px;background:#5a7b8e"></div><div class="pt" style="left:1583px;top:299px">100</div><div class="pt" style="left:1846px;top:299px">100</div><div class="pt" style="left:1596px;top:354px">0</div><div class="pt" style="left:1846px;top:354px">0</div><div class="a" style="left:1572px;top:389px;width:305px;height:3px;background:repeating-linear-gradient(90deg,#4a4a4a 0 1px,#3a3a3a 1px 2px)"></div><div class="a" style="left:1576px;top:396px;width:36px;height:21px;border:1px solid #9a9a9a;border-bottom:none;font-size:12px;line-height:21px;color:#fff;text-align:center;white-space:pre"><span class="cj">摘</span><span class="cj">要</span></div><div class="a" style="left:1612px;top:396px;width:35px;height:21px;border:1px solid #3c3c3c;border-bottom:none;font-size:12px;line-height:21px;color:#c8c8c8;text-align:center;white-space:pre"><span class="cj">事</span><span class="cj">件</span></div><div class="a" style="left:1648px;top:396px;width:47px;height:21px;border:1px solid #3c3c3c;border-bottom:none;font-size:12px;line-height:21px;color:#c8c8c8;text-align:center;white-space:pre"><span class="cj">计</span><span class="cj">数</span><span class="cj">器</span></div><div class="a" style="left:1696px;top:396px;width:72px;height:21px;border:1px solid #3c3c3c;border-bottom:none;font-size:12px;line-height:21px;color:#c8c8c8;text-align:center;white-space:pre"><span class="cj">内</span><span class="cj">存</span><span class="cj">使</span><span class="cj">用</span><span class="cj">率</span></div><div class="a" style="left:1769px;top:396px;width:75px;height:21px;border:1px solid #3c3c3c;border-bottom:none;font-size:12px;line-height:21px;color:#c8c8c8;text-align:center;white-space:pre">CPU <span class="cj">使</span><span class="cj">用</span><span class="cj">率</span></div><div class="a" style="left:1572px;top:416px;width:305px;height:2px;background:#9a9a9a"></div><div class="pt b" style="left:1581px;top:422px"><span class="cj">事</span><span class="cj">件</span></div><div class="sep" style="top:440px"></div><div class="pt" style="left:1608px;top:447px"><span class="cj">所</span><span class="cj">有</span><span class="cj">事</span><span class="cj">件</span>(0 <span class="cj">个</span><span class="cj">，</span><span class="cj">共</span> 0 <span class="cj">个</span>)</div><svg class="a" style="left:1587px;top:450px" width="14" height="8"><path d="M4 1L1 4l3 3M4 1l3 3-3 3M7 1l3 3-3 3M10 1l3 3-3 3" stroke="#999" stroke-width="1" fill="none"/></svg><svg class="a" style="left:1589px;top:474px" width="12" height="15"><path d="M6 10a4.5 4.5 0 1 1 0.01 0M4 11h4l-.5-3h-3zM4 12.5h4M4.5 14h3" stroke="#bbb" stroke-width="1.4" fill="none"/></svg><div class="pt" style="left:1608px;top:474px;letter-spacing:0.33px">Application Insights <span class="cj">事</span><span class="cj">件</span>(0 <span class="cj">个</span><span class="cj">，</span><span class="cj">共</span> 0 <span class="cj">个</span>)</div><div class="sep" style="top:495px"></div><div class="pt b" style="left:1581px;top:499px"><span class="cj">内</span><span class="cj">存</span><span class="cj">使</span><span class="cj">用</span><span class="cj">率</span></div><div class="sep" style="top:517px"></div><svg class="a" style="left:1587px;top:526px" width="14" height="11"><rect x="1" y="2" width="11" height="8" fill="#aaa"/><rect x="4" y="0.5" width="5" height="2" fill="#aaa"/><circle cx="6.5" cy="6" r="2.3" fill="#1f1f1f" stroke="#aaa"/></svg><div class="pt" style="left:1608px;top:524px"><span class="cj">截</span><span class="cj">取</span><span class="cj">快</span><span class="cj">照</span></div><div class="sep" style="top:545px"></div><div class="pt b" style="left:1581px;top:549px">CPU <span class="cj">使</span><span class="cj">用</span><span class="cj">率</span></div><div class="sep" style="top:567px"></div><svg class="a" style="left:1589px;top:576px" width="10" height="10"><circle cx="5" cy="5" r="4.5" fill="#aaa"/></svg><div class="pt" style="left:1608px;top:574px"><span class="cj">记</span><span class="cj">录</span> CPU <span class="cj">配</span><span class="cj">置</span><span class="cj">文</span><span class="cj">件</span></div><div class="a" style="left:1878px;top:0;width:32px;height:861px;background:#1f1f1f"></div><div class="a" style="left:1904px;top:10px;width:6px;height:106px;background:#333"></div><div class="a" style="left:1904px;top:129px;width:6px;height:44px;background:#333"></div><div class="pt" style="left:1900px;top:10px;transform-origin:0 0;transform:rotate(90deg);color:#bbb;font-size:12px;line-height:14px"><span class="cj">解</span><span class="cj">决</span><span class="cj">方</span><span class="cj">案</span><span class="cj">资</span><span class="cj">源</span><span class="cj">管</span><span class="cj">理</span><span class="cj">器</span></div><div class="pt" style="left:1900px;top:130px;transform-origin:0 0;transform:rotate(90deg);color:#bbb;font-size:12px;line-height:14px">Git <span class="cj">更</span><span class="cj">改</span></div></body></html>
